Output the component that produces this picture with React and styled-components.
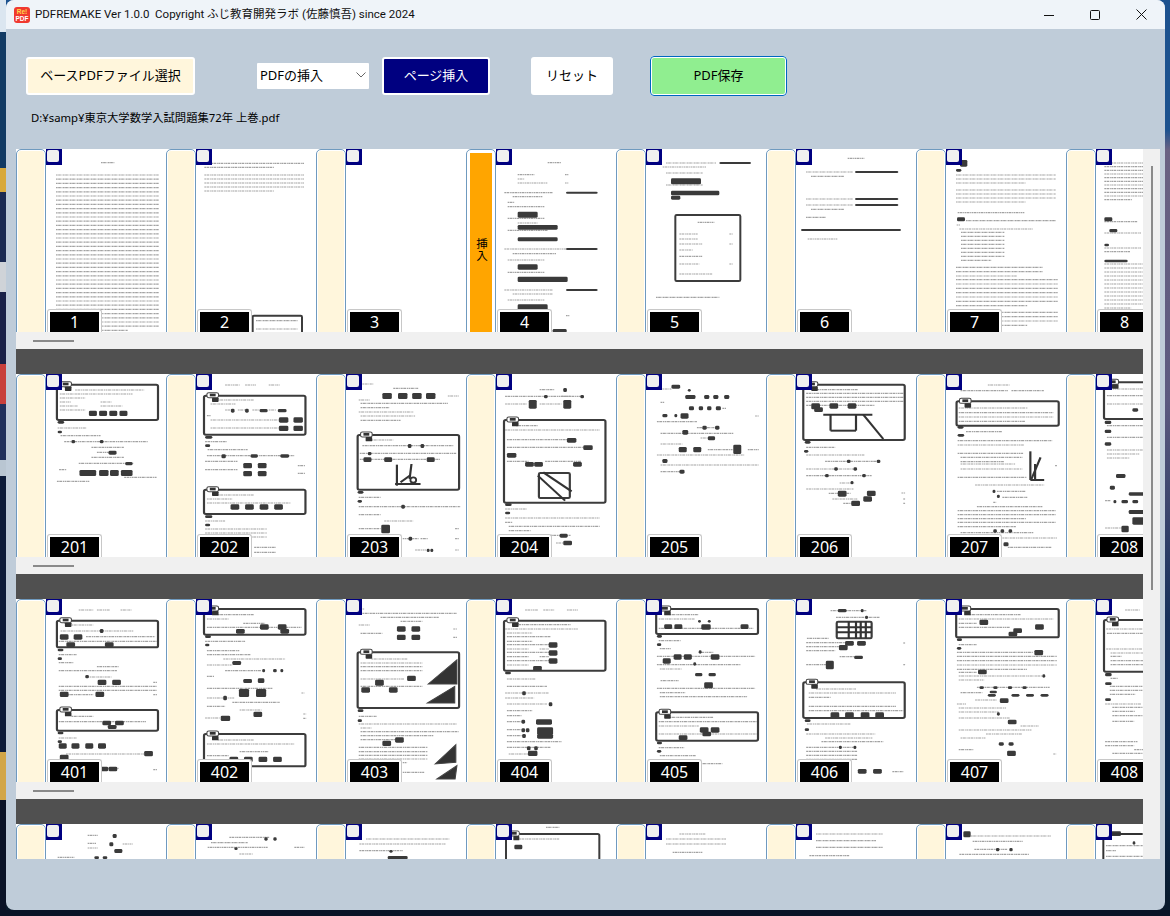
import React from 'react';
import styled, { createGlobalStyle } from 'styled-components';

const GlobalStyle = createGlobalStyle`
  html, body {
    margin: 0;
    padding: 0;
    background: #0a1424;
  }
  * { box-sizing: border-box; }
`;

const FONT = '"Noto Sans", "Noto Sans CJK JP", sans-serif';

// サムネイルの中身 (t:文字行 p:黒塗り b:枠+タグ r:枠 P:段落 l:線 c:円 g:多角形)
const ROW1 = [
  { t: [[165, 41, 40]], P: [[30, 78, 308, 38, 12.6]] },
  { P: [[25, 43, 300, 2, 12], [25, 78, 300, 5, 12]], r: [[170, 500, 148, 62]], t: [[180, 515, 125], [180, 540, 125]] },
  {},
  {
    t: [[155, 41, 40], [65, 77, 50], [65, 90, 20], [65, 102, 90], [207, 77, 10], [207, 102, 10], [25, 131, 25], [50, 131, 120], [50, 143, 90], [35, 160, 20], [35, 173, 110], [35, 208, 110], [65, 222, 60], [35, 244, 120], [25, 300, 25], [50, 300, 160], [50, 314, 130], [35, 333, 110], [35, 370, 110], [25, 423, 25], [50, 423, 120], [50, 435, 120], [35, 453, 110], [35, 488, 100], [210, 500, 10]],
    p: [[210, 128, 95, 6], [65, 188, 60, 18], [65, 228, 120, 14], [65, 265, 120, 12], [210, 297, 95, 6], [65, 346, 60, 16], [65, 383, 150, 16], [210, 420, 95, 6], [65, 466, 90, 20], [170, 540, 42, 14]],
  },
  {
    t: [[60, 42, 150], [50, 54, 130], [60, 72, 110], [60, 108, 110], [155, 220, 50], [100, 255, 55], [100, 270, 55], [100, 285, 70], [100, 303, 40], [100, 322, 70], [100, 345, 60], [100, 375, 100], [250, 255, 10], [250, 285, 10], [250, 345, 10], [30, 445, 190]],
    p: [[220, 39, 95, 6], [75, 88, 90, 18], [75, 125, 145, 14], [75, 140, 28, 12]],
    r: [[88, 198, 195, 198]],
  },
  {
    t: [[155, 28, 50], [30, 69, 140], [45, 82, 100], [30, 150, 140], [30, 168, 140], [45, 181, 100], [30, 205, 60], [35, 270, 90]],
    p: [[177, 66, 130, 6], [177, 147, 130, 6], [177, 165, 130, 6], [15, 240, 300, 6]],
  },
  {
    t: [[35, 191, 200], [60, 215, 270], [32, 228, 10], [40, 240, 220]],
    p: [[42, 33, 22, 20], [30, 60, 16, 8], [33, 205, 24, 12]],
    P: [[30, 78, 300, 3, 12], [30, 123, 300, 4, 12], [45, 250, 130, 8, 12], [30, 355, 260, 3, 13], [30, 392, 305, 7, 13], [30, 490, 305, 4, 13]],
  },
  {
    t: [[25, 218, 100], [25, 252, 110]],
    p: [[25, 205, 24, 12], [40, 240, 24, 10], [25, 284, 14, 8], [25, 332, 70, 8]],
    P: [[25, 42, 120, 11, 11], [25, 297, 110, 2, 11], [25, 345, 115, 12, 12]],
  },
];

const ROW2 = [
  {
    b: [[30, 32, 278, 106]],
    t: [[80, 48, 190], [38, 60, 200], [38, 72, 70], [38, 84, 30], [150, 84, 30], [38, 96, 50], [150, 96, 60], [38, 108, 70], [32, 162, 80], [40, 185, 110], [50, 203, 230], [125, 220, 90], [140, 235, 40], [125, 250, 90], [90, 268, 150], [36, 287, 20], [215, 310, 90], [30, 322, 90]],
    p: [[118, 110, 22, 16], [146, 110, 22, 16], [174, 110, 22, 16], [202, 110, 22, 16], [32, 141, 18, 8], [32, 170, 12, 8], [172, 230, 22, 12], [218, 264, 20, 10], [92, 288, 46, 18], [146, 288, 26, 18], [176, 288, 24, 18], [206, 288, 32, 18], [70, 198, 10, 10], [148, 198, 10, 10]],
  },
  {
    b: [[22, 65, 279, 117], [22, 347, 279, 73]],
    t: [[80, 33, 40], [135, 33, 30], [200, 33, 30], [60, 78, 100], [40, 90, 70], [80, 108, 20], [115, 108, 25], [155, 108, 25], [200, 108, 20], [30, 125, 10], [40, 138, 190], [40, 162, 190], [25, 203, 60], [32, 227, 110], [30, 245, 240], [25, 262, 90], [280, 275, 20], [25, 287, 90], [280, 298, 20], [60, 363, 100], [30, 375, 70], [30, 387, 230], [25, 441, 55], [160, 520, 60], [160, 535, 60]],
    p: [[96, 104, 10, 12], [135, 104, 10, 12], [175, 105, 22, 10], [225, 105, 24, 10], [228, 130, 26, 16], [268, 130, 26, 16], [228, 155, 26, 16], [268, 155, 26, 16], [25, 186, 20, 8], [25, 211, 14, 8], [70, 241, 12, 12], [150, 241, 20, 10], [232, 241, 24, 10], [130, 267, 24, 16], [170, 267, 24, 16], [130, 291, 24, 16], [170, 291, 24, 16], [95, 391, 24, 16], [135, 391, 24, 16], [175, 391, 24, 16], [215, 391, 24, 16], [25, 424, 20, 8], [25, 449, 14, 8]],
    P: [[25, 465, 170, 4, 12]],
  },
  {
    b: [[32, 183, 279, 164]],
    t: [[45, 30, 30], [130, 43, 70], [280, 66, 30], [35, 78, 30], [40, 88, 240], [40, 101, 80], [35, 114, 150], [40, 126, 150], [40, 139, 110], [70, 198, 60], [45, 215, 250], [38, 238, 265], [38, 256, 220], [35, 370, 60], [35, 398, 280], [35, 422, 60], [105, 441, 80], [35, 464, 60], [300, 464, 10], [140, 494, 60], [205, 494, 20], [300, 494, 10], [190, 528, 30], [300, 528, 10]],
    p: [[100, 57, 26, 18], [143, 57, 26, 18], [182, 57, 26, 18], [220, 57, 26, 18], [170, 210, 10, 12], [205, 210, 10, 12], [60, 234, 10, 10], [48, 250, 22, 14], [105, 250, 22, 14], [222, 250, 22, 14], [32, 351, 16, 8], [32, 378, 12, 8], [152, 392, 10, 12], [97, 452, 24, 26], [172, 488, 10, 12], [222, 524, 8, 10], [232, 524, 8, 10]],
    l: [[140, 272, 140, 335], [180, 270, 175, 315], [135, 330, 205, 330], [150, 325, 175, 305]],
    c: [[185, 318, 8]],
  },
  {
    b: [[22, 138, 279, 248]],
    t: [[120, 47, 40], [25, 67, 180], [180, 67, 60], [25, 90, 60], [120, 90, 60], [55, 155, 60], [25, 168, 260], [30, 197, 170], [30, 220, 230], [30, 262, 60], [135, 262, 100], [25, 405, 60], [25, 432, 260], [25, 445, 20], [35, 457, 250], [35, 470, 60], [25, 484, 180], [165, 507, 20]],
    p: [[185, 42, 10, 12], [132, 63, 10, 10], [232, 63, 10, 10], [90, 78, 22, 26], [185, 78, 22, 26], [195, 192, 26, 14], [240, 214, 26, 14], [30, 237, 26, 14], [80, 264, 24, 14], [105, 264, 24, 14], [212, 264, 24, 14], [25, 388, 18, 8], [25, 413, 14, 8], [175, 479, 22, 12], [185, 500, 24, 14]],
    r: [[118, 297, 85, 75]],
    l: [[115, 305, 190, 380], [130, 295, 208, 352]],
  },
  {
    t: [[45, 45, 25], [40, 85, 10], [210, 103, 10], [300, 126, 10], [30, 143, 110], [140, 161, 60], [40, 178, 200], [150, 192, 30], [40, 210, 60], [170, 227, 70], [280, 227, 30], [30, 243, 240], [40, 273, 270], [40, 293, 60]],
    p: [[70, 32, 24, 12], [115, 45, 8, 8], [108, 63, 28, 12], [160, 63, 14, 12], [185, 63, 14, 12], [215, 63, 14, 12], [118, 97, 14, 12], [145, 97, 12, 12], [168, 97, 12, 12], [192, 97, 14, 12], [45, 120, 14, 10], [78, 120, 8, 10], [95, 118, 22, 16], [155, 155, 12, 12], [190, 155, 12, 12], [100, 168, 16, 14], [170, 187, 20, 12], [90, 219, 22, 16], [130, 219, 22, 16], [240, 212, 22, 28], [45, 255, 14, 12], [92, 287, 14, 12]],
  },
  {
    b: [[20, 32, 279, 166]],
    t: [[50, 47, 120], [28, 220, 80], [28, 243, 160], [80, 262, 150], [28, 285, 130], [28, 305, 180], [120, 327, 40], [28, 345, 130], [90, 358, 60], [100, 375, 70], [130, 388, 30], [290, 357, 10], [295, 375, 5], [295, 388, 5]],
    P: [[28, 58, 270, 4, 12]],
    p: [[42, 88, 24, 18], [50, 100, 24, 14], [92, 88, 24, 16], [142, 88, 24, 16], [24, 201, 16, 8], [22, 228, 12, 8], [140, 257, 10, 10], [222, 257, 10, 10], [105, 280, 10, 10], [158, 280, 10, 10], [80, 300, 10, 10], [182, 300, 10, 10], [150, 321, 8, 10], [115, 350, 24, 18], [195, 350, 24, 16], [185, 367, 24, 16], [152, 380, 24, 16]],
    l: [[75, 122, 210, 122], [95, 122, 95, 170], [165, 122, 165, 170], [95, 170, 165, 170], [185, 122, 240, 195]],
  },
  {
    b: [[29, 82, 281, 73]],
    t: [[115, 33, 60], [40, 50, 130], [180, 50, 90], [35, 102, 190], [55, 173, 100], [32, 238, 180], [40, 270, 150], [40, 285, 170], [32, 310, 190], [300, 275, 6], [80, 333, 190], [140, 352, 80], [155, 370, 70], [130, 385, 8], [85, 398, 180], [32, 445, 270], [32, 458, 160], [40, 476, 200], [155, 492, 150], [170, 520, 120]],
    P: [[35, 116, 260, 3, 13], [32, 200, 260, 2, 13], [40, 250, 170, 2, 13], [32, 410, 270, 3, 12]],
    p: [[32, 156, 16, 8], [32, 180, 18, 8], [128, 347, 8, 10], [140, 362, 8, 10], [130, 466, 10, 10], [150, 466, 10, 10], [172, 466, 10, 10], [158, 505, 14, 12]],
    l: [[232, 232, 232, 318], [260, 250, 235, 315], [232, 318, 270, 318], [245, 270, 245, 318]],
  },
  {
    b: [[22, 25, 200, 110]],
    t: [[30, 45, 200], [30, 65, 100], [30, 90, 120], [30, 155, 100], [30, 190, 100], [30, 228, 100], [25, 380, 15], [25, 462, 60]],
    P: [[30, 240, 90, 2, 12]],
    p: [[100, 103, 16, 10], [24, 140, 18, 10], [24, 167, 18, 10], [24, 205, 18, 10], [55, 300, 26, 12], [38, 335, 14, 12], [90, 355, 50, 10], [48, 378, 8, 10], [70, 378, 18, 10], [100, 378, 16, 10], [90, 408, 50, 12], [100, 430, 40, 22], [70, 455, 20, 20]],
  },
];

const ROW3 = [
  {
    b: [[30, 65, 278, 80], [30, 333, 278, 62]],
    t: [[90, 33, 40], [140, 33, 35], [205, 33, 30], [70, 78, 60], [40, 96, 200], [110, 113, 190], [35, 127, 270], [35, 167, 50], [35, 191, 40], [140, 203, 60], [35, 215, 160], [120, 234, 60], [295, 250, 10], [35, 262, 270], [35, 274, 270], [60, 287, 70], [295, 287, 10], [70, 352, 60], [35, 368, 240], [35, 417, 50], [55, 465, 220], [150, 508, 50], [295, 512, 10]],
    p: [[148, 90, 10, 12], [38, 106, 24, 16], [76, 106, 24, 16], [56, 130, 24, 14], [162, 130, 24, 14], [32, 149, 16, 8], [32, 175, 12, 8], [108, 228, 10, 10], [142, 242, 24, 16], [182, 242, 24, 16], [38, 278, 24, 16], [136, 278, 24, 16], [155, 365, 24, 14], [190, 365, 24, 14], [170, 378, 24, 12], [32, 398, 16, 8], [32, 424, 12, 8], [35, 433, 22, 16], [70, 433, 22, 16], [108, 433, 22, 16], [143, 433, 22, 16], [270, 456, 24, 16], [38, 467, 24, 16], [147, 503, 24, 14], [172, 503, 24, 14]],
  },
  {
    b: [[22, 30, 279, 77], [22, 405, 279, 97]],
    t: [[60, 47, 100], [30, 60, 60], [130, 73, 60], [30, 85, 260], [25, 127, 110], [30, 155, 90], [30, 167, 120], [75, 180, 170], [30, 198, 70], [80, 215, 100], [30, 232, 20], [30, 268, 180], [30, 297, 75], [100, 310, 130], [290, 282, 8], [30, 322, 50], [120, 333, 60], [25, 357, 40], [295, 345, 8], [295, 358, 8], [60, 423, 100], [30, 435, 240], [30, 470, 60], [120, 458, 80]],
    p: [[176, 76, 24, 16], [225, 76, 24, 16], [232, 90, 24, 14], [110, 90, 24, 14], [25, 109, 16, 8], [25, 134, 12, 8], [100, 186, 24, 12], [182, 210, 8, 10], [212, 210, 10, 10], [232, 210, 8, 10], [130, 240, 24, 12], [170, 238, 18, 14], [118, 270, 28, 24], [165, 270, 28, 24], [75, 290, 10, 14], [158, 338, 24, 16], [68, 350, 26, 16], [92, 473, 24, 16], [132, 473, 24, 16], [172, 473, 24, 16], [212, 473, 24, 16]],
  },
  {
    b: [[32, 160, 279, 167]],
    t: [[40, 30, 10], [45, 43, 260], [95, 55, 160], [150, 67, 60], [35, 78, 30], [40, 103, 60], [295, 90, 10], [295, 115, 10], [70, 180, 100], [40, 192, 170], [40, 203, 170], [40, 215, 170], [40, 240, 120], [40, 262, 170], [35, 352, 50], [35, 375, 270], [40, 387, 30], [40, 398, 270], [40, 410, 200], [40, 422, 100], [35, 445, 190], [35, 520, 180]],
    P: [[35, 458, 190, 4, 11]],
    p: [[140, 82, 24, 16], [180, 82, 24, 16], [140, 107, 24, 16], [180, 107, 24, 16], [80, 242, 24, 18], [168, 230, 24, 16], [42, 265, 24, 16], [118, 265, 24, 16], [32, 331, 16, 8], [32, 361, 12, 8], [100, 425, 24, 16], [135, 415, 24, 16]],
    g: ['226,255 305,183 305,255', '224,312 299,262 299,312', '245,495 302,437 302,490', '250,540 305,500 300,540'],
  },
  {
    b: [[22, 65, 279, 150]],
    t: [[80, 33, 35], [130, 33, 30], [195, 33, 30], [55, 77, 150], [25, 90, 200], [30, 102, 70], [30, 113, 120], [30, 127, 70], [30, 137, 130], [30, 150, 60], [120, 150, 25], [30, 160, 130], [30, 173, 60], [120, 173, 25], [30, 185, 130], [30, 198, 60], [30, 240, 80], [30, 262, 110], [25, 282, 120], [25, 297, 80], [30, 315, 110], [30, 335, 70], [30, 350, 40], [30, 368, 50], [30, 392, 40], [30, 410, 40], [30, 428, 150], [30, 445, 120], [35, 465, 60]],
    p: [[145, 130, 24, 16], [145, 154, 24, 16], [145, 178, 24, 16], [102, 201, 24, 14], [25, 218, 16, 8], [72, 277, 10, 12], [145, 310, 10, 12], [110, 361, 44, 16], [70, 362, 10, 12], [70, 388, 10, 12], [82, 388, 10, 12], [113, 385, 44, 22], [72, 405, 10, 12], [113, 405, 44, 14], [85, 442, 10, 12], [105, 442, 10, 12], [88, 455, 26, 16]],
  },
  {
    b: [[28, 30, 280, 75], [28, 340, 280, 85]],
    t: [[65, 47, 80], [35, 60, 100], [35, 88, 260], [35, 125, 60], [38, 149, 30], [145, 160, 40], [30, 172, 270], [30, 197, 230], [38, 210, 60], [40, 245, 50], [30, 268, 270], [38, 281, 70], [38, 293, 240], [65, 355, 120], [35, 368, 270], [35, 381, 110], [35, 405, 270], [35, 446, 70], [38, 470, 100], [38, 482, 40], [150, 494, 60]],
    p: [[50, 76, 22, 14], [78, 76, 22, 14], [152, 76, 26, 16], [260, 76, 22, 14], [143, 63, 8, 8], [170, 63, 8, 8], [30, 108, 14, 8], [30, 133, 12, 8], [145, 154, 8, 10], [46, 178, 22, 16], [76, 166, 22, 16], [104, 166, 22, 16], [178, 166, 24, 16], [130, 190, 8, 10], [135, 222, 20, 10], [172, 222, 20, 10], [160, 250, 24, 18], [148, 385, 24, 16], [178, 385, 24, 16], [155, 398, 24, 14], [90, 409, 24, 14], [30, 428, 14, 8], [30, 453, 12, 8]],
  },
  {
    b: [[20, 250, 279, 107]],
    t: [[95, 35, 100], [110, 55, 120], [30, 118, 60], [28, 131, 110], [295, 132, 5], [28, 143, 90], [28, 155, 80], [120, 173, 60], [28, 197, 60], [295, 197, 5], [55, 270, 110], [35, 282, 240], [35, 295, 60], [35, 322, 240], [35, 335, 260], [30, 375, 120], [28, 405, 190], [80, 417, 130], [70, 428, 170], [28, 445, 130], [28, 457, 140], [28, 469, 140], [28, 481, 140], [265, 518, 30]],
    p: [[115, 30, 24, 10], [178, 30, 8, 10], [190, 50, 8, 10], [135, 126, 24, 14], [168, 126, 24, 14], [118, 138, 24, 16], [160, 170, 24, 10], [82, 185, 22, 26], [95, 340, 24, 16], [135, 340, 24, 16], [178, 340, 24, 16], [218, 340, 24, 16], [24, 361, 16, 8], [24, 388, 12, 8], [118, 440, 8, 10], [158, 440, 8, 10], [170, 510, 24, 14], [212, 510, 24, 14]],
    r: [[112, 68, 96, 50]],
    l: [[112, 85, 208, 85], [112, 100, 208, 100], [145, 68, 145, 118], [165, 68, 165, 118], [178, 68, 178, 118], [192, 68, 192, 118]],
  },
  {
    b: [[28, 30, 282, 85]],
    t: [[65, 47, 140], [35, 60, 260], [35, 73, 50], [35, 85, 140], [35, 137, 50], [30, 160, 210], [35, 220, 50], [35, 231, 230], [35, 243, 70], [85, 265, 200], [40, 281, 60], [80, 303, 60], [30, 315, 25], [35, 327, 130], [35, 339, 110], [35, 357, 140], [205, 381, 50], [35, 393, 200], [110, 405, 100], [40, 417, 70], [35, 452, 40], [295, 465, 8]],
    P: [[30, 172, 275, 4, 13]],
    p: [[92, 62, 24, 16], [245, 76, 24, 16], [185, 88, 24, 14], [172, 98, 24, 14], [30, 118, 14, 8], [30, 144, 12, 8], [243, 153, 24, 16], [88, 212, 24, 14], [265, 226, 8, 10], [92, 262, 12, 8], [130, 262, 12, 8], [170, 262, 12, 8], [210, 262, 12, 8], [120, 275, 20, 8], [115, 285, 22, 8], [180, 285, 22, 8], [220, 285, 22, 8], [260, 285, 22, 8], [148, 298, 24, 14], [140, 340, 8, 10], [170, 362, 24, 14], [145, 430, 14, 10], [172, 430, 14, 10], [168, 455, 24, 16]],
  },
  {
    b: [[22, 63, 200, 155]],
    t: [[80, 33, 40], [28, 90, 110], [30, 103, 110], [28, 150, 100], [40, 162, 100], [40, 172, 30], [40, 185, 100], [40, 197, 100], [40, 238, 20], [25, 315, 100], [45, 350, 100], [45, 367, 60], [25, 428, 90], [25, 440, 80], [105, 452, 30], [45, 463, 90]],
    P: [[38, 262, 100, 3, 12], [45, 325, 90, 2, 12]],
    p: [[25, 222, 18, 10], [25, 250, 18, 8], [25, 298, 16, 8]],
  },
];

const ROW4 = [
  { t: [[125, 34, 30], [125, 58, 25], [230, 60, 30], [125, 72, 30], [35, 100, 50]], p: [[200, 30, 12, 12], [190, 55, 12, 12], [205, 75, 24, 12], [145, 97, 14, 8], [170, 97, 14, 8]] },
  { t: [[100, 40, 120], [45, 56, 110], [35, 70, 180], [295, 70, 30], [130, 90, 40]], p: [[205, 40, 10, 10], [232, 40, 10, 10], [115, 70, 10, 8]] },
  { t: [[60, 45, 250], [40, 60, 260], [40, 80, 130]], p: [[130, 78, 10, 8], [125, 96, 60, 10]] },
  { t: [[150, 10, 40], [70, 45, 120]], b: [[30, 30, 280, 80]], p: [[55, 62, 24, 14]] },
  { t: [[100, 30, 80], [60, 45, 180], [60, 60, 180], [80, 85, 90]] },
  { t: [[60, 30, 200], [60, 50, 180], [60, 70, 200], [40, 95, 120]] },
  { t: [[75, 36, 240], [80, 52, 150], [85, 76, 100], [40, 91, 210]], p: [[52, 22, 22, 18], [150, 72, 10, 10], [190, 72, 10, 10]] },
  { t: [[30, 65, 110], [30, 80, 30], [30, 97, 110]], p: [[45, 22, 30, 14], [110, 52, 8, 10]], l: [[50, 30, 140, 30], [22, 45, 22, 105]] },
];

// 4段目は番号が見えない位置で切れるのでラベルなし
const ROWS = [
  { id: 'a', scale: 3, pages: ROW1, numbers: [1, 2, 3, 4, 5, 6, 7, 8] },
  { id: 'b', scale: 2.75, pages: ROW2, numbers: [201, 202, 203, 204, 205, 206, 207, 208] },
  { id: 'c', scale: 2.75, pages: ROW3, numbers: [401, 402, 403, 404, 405, 406, 407, 408] },
  { id: 'd', scale: 3, pages: ROW4, numbers: [] },
];

const SPOTS = [
  { top: 0, height: 32, color: '#dbe6f0' },
  { top: 32, height: 136, color: '#123a63' },
  { top: 168, height: 24, color: '#d8a93c' },
  { top: 192, height: 70, color: '#1b2a52' },
  { top: 262, height: 30, color: '#cfd3d8' },
  { top: 292, height: 72, color: '#1a2148' },
  { top: 364, height: 40, color: '#c8403c' },
  { top: 404, height: 56, color: '#20305c' },
  { top: 460, height: 16, color: '#b9c6d2' },
  { top: 476, height: 276, color: '#0d1c3a' },
  { top: 752, height: 48, color: '#d2a648' },
  { top: 800, height: 116, color: '#0a1226' },
];

const Desktop = styled.div`
  position: relative;
  width: 1170px;
  height: 916px;
  padding: 0 5px 6px 6px;
  overflow: hidden;
  background: linear-gradient(180deg, #1d528f 0, #1d528f 130px, #6a6283 150px, #5d5a80 400px, #17305a 620px, #0b2a50 800px, #0a1a2c 905px);
`;

const DesktopSpot = styled.div`
  position: absolute;
  left: 0;
  top: ${(p) => p.$top}px;
  width: 6px;
  height: ${(p) => p.$height}px;
  background: ${(p) => p.$color};
`;

const BottomEdge = styled.div`
  position: absolute;
  left: 0;
  right: 0;
  bottom: 0;
  height: 6px;
  background: #0a1226;
`;

const Window = styled.div`
  position: relative;
  z-index: 1;
  display: flex;
  flex-direction: column;
  height: 910px;
  background: #bfccd9;
  border-radius: 8px;
  overflow: hidden;
  font-family: ${FONT};
  color: #000;
`;

const TitleBar = styled.div`
  display: flex;
  align-items: center;
  height: 29px;
  flex: none;
  padding-left: 8px;
  background: #eff4f9;
`;

const TitleText = styled.span`
  margin-left: 5px;
  font-family: Roboto, "Noto Sans CJK JP", sans-serif;
  font-size: 11.5px;
  line-height: 29px;
  white-space: pre;
  color: #111;
`;

const WindowControls = styled.div`
  display: flex;
  margin-left: auto;
  padding-right: 1px;
`;

const ControlButton = styled.div`
  display: flex;
  align-items: center;
  justify-content: center;
  width: 46px;
  height: 29px;
`;

const Toolbar = styled.div`
  display: flex;
  align-items: center;
  height: 40px;
  flex: none;
  margin-top: 27px;
  padding-left: 20px;
`;

const ToolButton = styled.button`
  display: flex;
  align-items: center;
  justify-content: center;
  width: ${(p) => p.$width}px;
  height: 38px;
  margin-left: ${(p) => p.$gap || 0}px;
  padding: 0 0 3px;
  font-family: inherit;
  font-size: 13px;
  color: ${(p) => p.$color || '#000'};
  background: ${(p) => p.$bg};
  border: 2px solid #fff;
  border-radius: 3px;
`;

const SaveButton = styled(ToolButton)`
  height: 40px;
  border: 2px solid #fff;
  outline: 1px solid #0067c0;
  outline-offset: -1px;
  border-radius: 4px;
`;

const InsertSelect = styled.div`
  display: flex;
  align-items: center;
  justify-content: space-between;
  width: 112px;
  height: 26px;
  margin-left: 62px;
  padding: 0 3px 3px 3px;
  font-size: 13px;
  background: #fff;
  border-radius: 1px;
`;

const PathLabel = styled.div`
  flex: none;
  height: 14px;
  margin: 15px 0 0 25px;
  font-size: 11.3px;
  line-height: 14px;
`;

const Viewer = styled.div`
  display: flex;
  flex: none;
  height: 710px;
  margin: 24px 5px 0 10px;
`;

const RowList = styled.div`
  width: 1127px;
  height: 710px;
  overflow: hidden;
`;

const PageRow = styled.div`
  display: flex;
  height: 183px;
  overflow: hidden;
`;

const HorizontalBar = styled.div`
  display: flex;
  align-items: center;
  height: 17px;
  padding-left: 17px;
  background: #f0f0f0;
`;

const HorizontalThumb = styled.div`
  width: 41px;
  height: 2px;
  background: #8a8a8a;
`;

const RowDivider = styled.div`
  height: 25px;
  background: #505050;
`;

const VerticalBar = styled.div`
  width: 17px;
  height: 710px;
  padding: 17px 0 0 8px;
  background: #f0f0f0;
`;

const VerticalThumb = styled.div`
  width: 2px;
  height: 424px;
  background: #8a8a8a;
`;

const Cell = styled.div`
  position: relative;
  display: flex;
  flex: none;
  width: 150px;
  height: 183px;
  background: #fff;
`;

const InsertButton = styled.div`
  display: flex;
  align-items: center;
  justify-content: center;
  width: 30px;
  height: 198px;
  flex: none;
  background: #fff;
  border: 1px solid #6f9abf;
  border-radius: 5px 5px 0 0;
  padding: ${(p) => (p.$active ? '3px 3px 0' : '1px 1px 0')};
`;

const InsertFace = styled.div`
  display: flex;
  align-items: center;
  justify-content: center;
  width: 100%;
  height: 100%;
  font-size: 11.5px;
  line-height: 12px;
  writing-mode: vertical-rl;
  background: ${(p) => (p.$active ? '#ffa500' : '#fff6dc')};
  border-radius: ${(p) => (p.$active ? '0' : '3px 3px 0 0')};
  color: #000;
`;

const PageSheet = styled.svg`
  display: block;
  flex: none;
  width: 120px;
  height: 183px;
  filter: blur(0.6px);
`;

const CheckFrame = styled.div`
  position: absolute;
  left: 30px;
  top: 0;
  width: 16px;
  height: 16px;
  padding: 1px 0 0 1px;
  background: #000080;
`;

const CheckBox = styled.div`
  width: 12px;
  height: 12px;
  background: #efefef;
  border-radius: 2px;
`;

const PageLabel = styled.div`
  position: absolute;
  left: 31px;
  bottom: 0;
  width: 55px;
  height: 23px;
  padding: 2px 2px 0;
  background: #fff;
  border: 1px solid #c8c8c8;
  border-bottom: none;
  border-radius: 3px 3px 0 0;
`;

const PageNumber = styled.div`
  height: 20px;
  font-size: 16px;
  line-height: 21px;
  text-align: center;
  color: #fff;
  background: #000;
`;

const Page = ({ data, scale }) => {
  const { t = [], P = [], p = [], b = [], r = [], l = [], c = [], g = [] } = data;
  const lines = [...t];
  P.forEach(([x, y, w, n, dy]) => {
    for (let i = 0; i < n; i++) lines.push([x, y + i * dy, i === n - 1 ? w * 0.7 : w]);
  });
  return (
    <PageSheet viewBox={`0 0 ${120 * scale} 549`} preserveAspectRatio="none">
      {lines.map(([x, y, w], i) => (
        <line key={i} x1={x} y1={y} x2={x + w} y2={y} stroke="#a2a2a2" strokeWidth="3.6" strokeDasharray="5 1.5 8 2 3 1.5" />
      ))}
      {r.map(([x, y, w, h], i) => (
        <rect key={i} x={x} y={y} width={w} height={h} rx="4" fill="none" stroke="#3c3c3c" strokeWidth="6" />
      ))}
      {b.map(([x, y, w, h], i) => (
        <g key={i}>
          <rect x={x} y={y} width={w} height={h} rx="5" fill="none" stroke="#3c3c3c" strokeWidth="6" />
          <rect x={x + 8} y={y - 9} width={32} height={15} rx="5" fill="#fff" stroke="#444" strokeWidth="3" />
          <rect x={x + 16} y={y - 6} width={16} height={8} fill="#333" />
          <rect x={x + 22} y={y + 6} width={18} height={13} rx="2" fill="#333" />
        </g>
      ))}
      {p.map(([x, y, w, h], i) => (
        <rect key={i} x={x} y={y} width={w} height={h} rx="4" fill="#3a3a3a" />
      ))}
      {l.map(([x1, y1, x2, y2], i) => (
        <line key={i} x1={x1} y1={y1} x2={x2} y2={y2} stroke="#333" strokeWidth="6" />
      ))}
      {c.map(([cx, cy, rad], i) => (
        <circle key={i} cx={cx} cy={cy} r={rad} fill="none" stroke="#333" strokeWidth="5" />
      ))}
      {g.map((points, i) => (
        <polygon key={i} points={points} fill="#333" stroke="#444" strokeWidth="3" />
      ))}
    </PageSheet>
  );
};

const AppIcon = () => (
  <svg width="16" height="16" viewBox="0 0 16 16">
    <rect width="16" height="16" rx="3" fill="#f0392f" />
    <text x="8" y="7" textAnchor="middle" fontSize="6.5" fontWeight="700" fontFamily="Liberation Sans, sans-serif" fill="#ffd84a">Re!</text>
    <text x="8" y="14" textAnchor="middle" fontSize="6.5" fontWeight="700" fontFamily="Liberation Sans, sans-serif" fill="#fff">PDF</text>
  </svg>
);

const App = () => (
  <>
    <GlobalStyle />
    <Desktop>
      {SPOTS.map((s) => (
        <DesktopSpot key={s.top} $top={s.top} $height={s.height} $color={s.color} />
      ))}
      <BottomEdge />
      <Window>
        <TitleBar>
          <AppIcon />
          <TitleText>PDFREMAKE Ver 1.0.0  Copyright ふじ教育開発ラボ (佐藤慎吾) since 2024</TitleText>
          <WindowControls>
            <ControlButton>
              <svg width="10" height="10" viewBox="0 0 10 10"><rect x="0" y="5" width="10" height="1" fill="#111" /></svg>
            </ControlButton>
            <ControlButton>
              <svg width="10" height="10" viewBox="0 0 10 10"><rect x="0.5" y="0.5" width="9" height="9" rx="1" fill="none" stroke="#111" /></svg>
            </ControlButton>
            <ControlButton>
              <svg width="11" height="11" viewBox="0 0 11 11"><path d="M0.5 0.5 L10.5 10.5 M10.5 0.5 L0.5 10.5" stroke="#111" /></svg>
            </ControlButton>
          </WindowControls>
        </TitleBar>
        <Toolbar>
          <ToolButton $width={169} $bg="#fff6dc">ベースPDFファイル選択</ToolButton>
          <InsertSelect>
            PDFの挿入
            <svg width="10" height="6" viewBox="0 0 10 6"><path d="M0.5 0.5 L5 5 L9.5 0.5" fill="none" stroke="#666" /></svg>
          </InsertSelect>
          <ToolButton $width={108} $gap={13} $bg="#000080" $color="#fff">ページ挿入</ToolButton>
          <ToolButton $width={82} $gap={41} $bg="#fff">リセット</ToolButton>
          <SaveButton $width={137} $gap={37} $bg="#90ee90">PDF保存</SaveButton>
        </Toolbar>
        <PathLabel>D:¥samp¥東京大学数学入試問題集72年 上巻.pdf</PathLabel>
        <Viewer>
          <RowList>
            {ROWS.map((row) => (
              <div key={row.id}>
                <PageRow>
                  {row.pages.map((page, i) => {
                    const active = row.numbers[i] === 4;
                    return (
                      <Cell key={i}>
                        <InsertButton $active={active}>
                          <InsertFace $active={active}>{active ? '挿入' : ''}</InsertFace>
                        </InsertButton>
                        <Page data={page} scale={row.scale} />
                        <CheckFrame><CheckBox /></CheckFrame>
                        {row.numbers[i] && <PageLabel><PageNumber>{row.numbers[i]}</PageNumber></PageLabel>}
                      </Cell>
                    );
                  })}
                </PageRow>
                <HorizontalBar><HorizontalThumb /></HorizontalBar>
                <RowDivider />
              </div>
            ))}
          </RowList>
          <VerticalBar><VerticalThumb /></VerticalBar>
        </Viewer>
      </Window>
    </Desktop>
  </>
);

export default App;
